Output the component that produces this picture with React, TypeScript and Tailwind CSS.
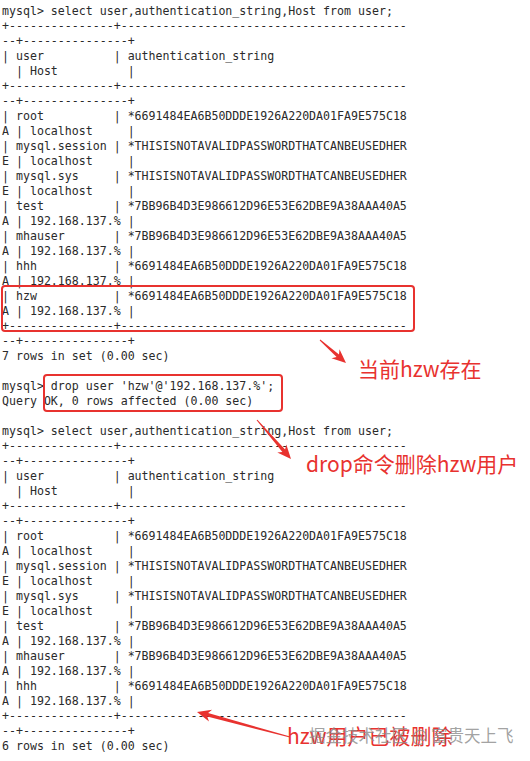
const sep1 = "+---------------+-----------------------------------------";
const sep2 = "--+---------------+";

const table = (rows: [string, string, string][]) => [
  sep1,
  sep2,
  "| user          | authentication_string",
  "  | Host          |",
  sep1,
  sep2,
  ...rows.flatMap(([u, h, host]) => [
    `| ${u.padEnd(13)} | ${h.slice(0, 40)}`,
    `${h.slice(40)} | ${host.padEnd(13)} |`,
  ]),
  sep1,
  sep2,
];

const ROOT = "*6691484EA6B50DDDE1926A220DA01FA9E575C18A";
const NOPE = "*THISISNOTAVALIDPASSWORDTHATCANBEUSEDHERE";
const TEST = "*7BB96B4D3E986612D96E53E62DBE9A38AAA40A5A";

const rows: [string, string, string][] = [
  ["root", ROOT, "localhost"],
  ["mysql.session", NOPE, "localhost"],
  ["mysql.sys", NOPE, "localhost"],
  ["test", TEST, "192.168.137.%"],
  ["mhauser", TEST, "192.168.137.%"],
  ["hhh", ROOT, "192.168.137.%"],
];

const lines = [
  "mysql> select user,authentication_string,Host from user;",
  ...table([...rows, ["hzw", ROOT, "192.168.137.%"]]),
  "7 rows in set (0.00 sec)",
  "",
  "mysql> drop user 'hzw'@'192.168.137.%';",
  "Query OK, 0 rows affected (0.00 sec)",
  "",
  "mysql> select user,authentication_string,Host from user;",
  ...table(rows),
  "6 rows in set (0.00 sec)",
];

// tapered arrow from (x1,y1) tail to (x2,y2) tip
function arrow(x1: number, y1: number, x2: number, y2: number) {
  const len = Math.hypot(x2 - x1, y2 - y1);
  const dx = (x2 - x1) / len;
  const dy = (y2 - y1) / len;
  const nx = -dy;
  const ny = dx;
  const p = (a: number, b: number) => `${a.toFixed(1)},${b.toFixed(1)}`;
  const at = (back: number, side: number) =>
    p(x2 - dx * back + nx * side, y2 - dy * back + ny * side);
  return [
    p(x1 + nx * 0.5, y1 + ny * 0.5),
    at(11, 1.8),
    at(14, 6),
    at(0, 0),
    at(14, -6),
    at(11, -1.8),
    p(x1 - nx * 0.5, y1 - ny * 0.5),
  ].join(" ");
}

const cjk = { fontFamily: '"Noto Sans CJK SC", "Noto Sans", sans-serif' };

export default function App() {
  return (
    <div className="relative w-[530px] h-[761px] overflow-hidden bg-white">
      <div
        className="pt-[4px] pl-[2px] text-[11.6px] text-[#2a2a2a]"
        style={{ fontFamily: '"DejaVu Sans Mono", monospace' }}
      >
        {lines.map((l, i) => (
          <div key={i} className="h-[15px] leading-[15px] whitespace-pre">
            {l}
          </div>
        ))}
      </div>

      <div className="absolute left-[1px] top-[285px] w-[414px] h-[47px] border-2 border-[#e8322f] rounded-[4px]" />
      <div className="absolute left-[43px] top-[374px] w-[240px] h-[38px] border-2 border-[#e8322f] rounded-[4px]" />

      <svg className="absolute inset-0 pointer-events-none" width={530} height={761}>
        <polygon points={arrow(320, 340, 346, 363)} fill="#e8322f" />
        <polygon points={arrow(257, 420, 291, 459)} fill="#e8322f" />
        <polygon points={arrow(290, 737, 197, 712)} fill="#e8322f" />
      </svg>

      <div
        className="absolute left-[358px] top-[354px] text-[21px] leading-[28px] text-[#e8322f] whitespace-nowrap"
        style={cjk}
      >
        当前hzw存在
      </div>
      <div
        className="absolute left-[306px] top-[449px] text-[21px] leading-[28px] text-[#e8322f] whitespace-nowrap"
        style={cjk}
      >
        drop命令删除hzw用户
      </div>
      <div
        className="absolute left-[287px] top-[721px] text-[21px] leading-[28px] text-[#e8322f] whitespace-nowrap"
        style={cjk}
      >
        hzw用户已被删除
      </div>
      <div
        className="absolute left-[309px] top-[724px] text-[16.5px] leading-[22px] text-[#8a8a8a]/80 whitespace-nowrap"
        style={cjk}
      >
        掘金技术社区 @ 富贵天上飞
      </div>
    </div>
  );
}
